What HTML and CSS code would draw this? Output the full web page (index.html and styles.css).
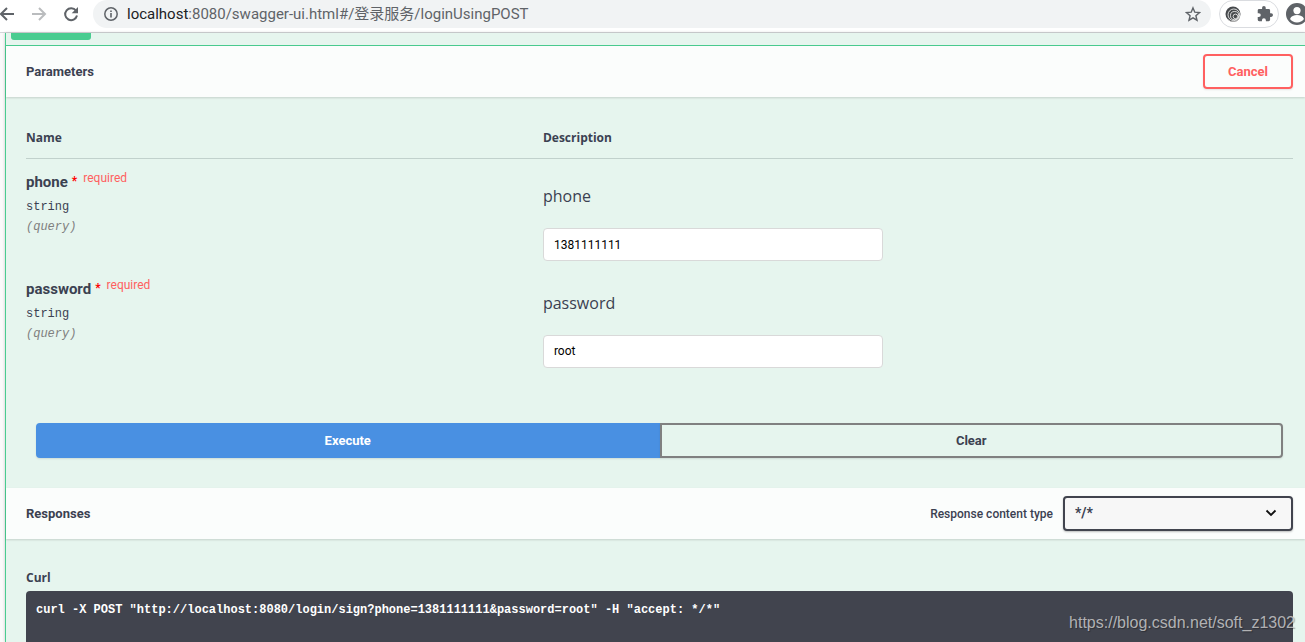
FILE: index.html
```html
<!DOCTYPE html>
<html lang="en">
<head>
<meta charset="utf-8">
<title>Swagger UI</title>
<link rel="stylesheet" href="styles.css">
</head>
<body>
<header class="toolbar">
  <nav class="nav" aria-label="Browser navigation">
    <button class="icon-btn" aria-label="Back"><svg width="16" height="16" viewBox="0 0 16 16"><path d="M15 8H2M8 2L2 8l6 6" fill="none" stroke="#5f6368" stroke-width="2"/></svg></button>
    <button class="icon-btn" aria-label="Forward"><svg width="16" height="16" viewBox="0 0 16 16"><path d="M1 8h13M8 2l6 6-6 6" fill="none" stroke="#babcbe" stroke-width="2"/></svg></button>
    <button class="icon-btn" aria-label="Reload"><svg width="16" height="16" viewBox="0 0 16 16"><path d="M13 4.6A6 6 0 1 0 14 9.600" fill="none" stroke="#5f6368" stroke-width="2"/><path d="M15 1v6.300H8.700z" fill="#5f6368"/></svg></button>
  </nav>
  <div class="omnibox">
    <svg width="14" height="14" viewBox="0 0 14 14"><circle cx="7" cy="7" r="6.200" fill="none" stroke="#5f6368" stroke-width="1.500"/><path d="M6.200 6h1.600v4.500H6.200zM6.200 3.400h1.600V5H6.200z" fill="#5f6368"/></svg>
    <span class="url"><span class="host">localhost</span>:8080/swagger-ui.html#/登录服务/loginUsingPOST</span>
    <button class="icon-btn" aria-label="Bookmark"><svg width="16" height="16" viewBox="0 0 16 16"><path d="M8 1.900l1.800 4.300 4.700.4-3.600 3.100 1.100 4.500L8 11.800l-4 2.400 1.100-4.500-3.600-3.100 4.700-.4z" fill="none" stroke="#5f6368" stroke-width="1.400"/></svg></button>
  </div>
  <div class="extensions">
    <button class="icon-btn" aria-label="Extension"><svg width="16" height="16" viewBox="0 0 16 16"><circle cx="8" cy="8" r="7.500" fill="#46494c"/><g fill="none" stroke="#fff" stroke-width=".8"><circle cx="8.800" cy="8.800" r="5.800"/><circle cx="9.600" cy="9.600" r="4.100"/><circle cx="10.400" cy="10.400" r="2.300"/></g><path d="M3 13.500a7.500 7.500 0 0 0 11.500-1" fill="none" stroke="#aaa"/></svg></button>
    <button class="icon-btn" aria-label="Extensions"><svg width="16" height="16" viewBox="1 1 22 22"><path d="M20.500 11H19V7a2 2 0 0 0-2-2h-4V3.500a2.500 2.500 0 0 0-5 0V5H4a2 2 0 0 0-2 2v3.800h1.500a2.700 2.700 0 0 1 0 5.400H2V20a2 2 0 0 0 2 2h3.800v-1.500a2.700 2.700 0 0 1 5.400 0V22H17a2 2 0 0 0 2-2v-4h1.500a2.500 2.500 0 0 0 0-5z" fill="#5f6368"/></svg></button>
  </div>
  <button class="icon-btn profile" aria-label="Profile"><svg width="22" height="22" viewBox="0 0 22 22"><circle cx="11" cy="11" r="11" fill="#5f6368"/><circle cx="11" cy="7.600" r="3.600" fill="#fff"/><path d="M4 16c1-3 4-4 7-4s6 1 7 4c-1.700 2.200-4 3.500-7 3.500S5.700 18.200 4 16z" fill="#fff"/></svg></button>
</header>
<main class="operation">
  <div class="summary"><span class="method"></span></div>
  <section class="section-head">
    <h4>Parameters</h4>
    <button class="btn cancel">Cancel</button>
  </section>
  <section class="parameters">
    <table>
      <thead><tr><th class="col-name">Name</th><th>Description</th></tr></thead>
      <tbody>
        <tr>
          <td>
            <div class="param-name">phone<span class="star">*</span><span class="required">required</span></div>
            <div class="param-type">string</div>
            <div class="param-in">(query)</div>
          </td>
          <td><label for="phone">phone</label><input id="phone" type="text" value="1381111111"></td>
        </tr>
        <tr>
          <td>
            <div class="param-name">password<span class="star">*</span><span class="required">required</span></div>
            <div class="param-type">string</div>
            <div class="param-in">(query)</div>
          </td>
          <td><label for="password">password</label><input id="password" type="text" value="root"></td>
        </tr>
      </tbody>
    </table>
  </section>
  <div class="actions">
    <button class="btn execute">Execute</button>
    <button class="btn clear">Clear</button>
  </div>
  <section class="section-head">
    <h4>Responses</h4>
    <label class="type-label" for="content-type">Response content type</label>
    <div class="select">
      <select id="content-type"><option>*/*</option></select>
      <svg width="12" height="8" viewBox="0 0 12 8"><path d="M1.500 1.500L6 6l4.500-4.500" fill="none" stroke="#111" stroke-width="1.800"/></svg>
    </div>
  </section>
  <section class="curl">
    <h4>Curl</h4>
    <pre>curl -X POST "http://localhost:8080/login/sign?phone=1381111111&amp;password=root" -H "accept: */*"</pre>
  </section>
</main>
<div class="watermark">https://blog.csdn.net/soft_z1302</div>
</body>
</html>
```
FILE: styles.css
```css
* { box-sizing: border-box; }

body {
  display: flex;
  flex-direction: column;
  height: 100vh;
  margin: 0;
  overflow: hidden;
  background: #fafafa;
  color: #3b4151;
  font-family: "Open Sans", sans-serif;
}

h4 { margin: 0; }
button { font: inherit; cursor: pointer; }
svg { display: block; }

.toolbar {
  display: flex;
  align-items: flex-start;
  flex: none;
  height: 33px;
  background: #fff;
  border-bottom: 1px solid #d5d7da;
}

.icon-btn {
  flex: none;
  padding: 0;
  border: 0;
  background: none;
}

.nav {
  display: flex;
  gap: 16px;
  padding: 6px 14px 0 0;
  margin-left: -1px;
}

.omnibox {
  display: flex;
  align-items: center;
  flex: 1;
  gap: 9px;
  height: 28px;
  padding: 0 10px 0 11px;
  background: #f1f3f4;
  border-radius: 14px;
}

.url {
  flex: 1;
  color: #5f6368;
  font: 15px/20px Roboto, "Noto Sans CJK SC", sans-serif;
}
.host { color: #202124; }

.extensions {
  display: flex;
  align-items: center;
  gap: 16px;
  height: 28px;
  margin: 0 7px 0 8px;
  padding: 0 5px;
  border: 1px solid #dadce0;
  border-radius: 14px;
}

.profile {
  width: 19px;
  margin-top: 3px;
  overflow: hidden;
}

.operation {
  display: flex;
  flex: 1;
  flex-direction: column;
  min-height: 0;
  margin-left: 5px;
  background: #e6f5ee;
  border-left: 1px solid #49cc90;
  box-shadow: 0 0 3px rgba(0, 0, 0, .2);
}

.summary {
  flex: none;
  height: 13px;
  padding-left: 5px;
  border-bottom: 1px solid #49cc90;
}

.method {
  display: block;
  width: 80px;
  height: 7px;
  background: #49cc90;
  border-radius: 0 0 3px 3px;
}

.section-head {
  display: flex;
  align-items: center;
  flex: none;
  min-height: 51px;
  padding: 8px 12px 8px 20px;
  background: #fbfdfc;
  box-shadow: 0 1px 2px rgba(0, 0, 0, .15);
}
.section-head h4 {
  flex: 1;
  padding-top: 1px;
  font: bold 13px/20px Roboto, sans-serif;
}

.btn {
  height: 35px;
  padding: 1px 6px 0;
  border: 2px solid #808080;
  border-radius: 4px;
  background: transparent;
  box-shadow: 0 1px 2px rgba(0, 0, 0, .1);
  color: #3b4151;
  font: bold 13px/20px Roboto, sans-serif;
}

.cancel {
  width: 90px;
  border-color: #ff6060;
  color: #ff6060;
}

.parameters { padding: 20px 12px 0 20px; }

table {
  width: 100%;
  border-collapse: collapse;
  table-layout: fixed;
}
th {
  padding: 12px 0;
  border-bottom: 1px solid #c1d1cc;
  font-size: 12px;
  line-height: 17px;
  text-align: left;
}
.col-name { width: 40.8%; }
td {
  height: 107px;
  padding: 11px 0 0;
  vertical-align: top;
}

.param-name {
  display: flex;
  font: bold 15px/24px Roboto, sans-serif;
}
.star {
  margin: 0 6px 0 4px;
  color: #f00;
  font-size: 12px;
  line-height: 22px;
}
.required {
  color: #ff6060;
  font-size: 12px;
  font-weight: 400;
  line-height: 17px;
}
.param-type, .param-in {
  font: 12px/20px "Liberation Mono", monospace;
}
.param-type { padding-top: 3px; }
.param-in {
  color: #808080;
  font-style: italic;
}

td label {
  display: block;
  padding: 14px 0 20px;
  font-size: 16px;
  line-height: 24px;
}
td input {
  display: block;
  width: 340px;
  max-width: 100%;
  height: 33px;
  padding: 0 10px;
  border: 1px solid #d9d9d9;
  border-radius: 4px;
  background: #fff;
  color: #000;
  font: 12px/20px Roboto, sans-serif;
}

.actions {
  display: flex;
  padding: 50px 22px 30px 30px;
}
.actions .btn { flex: 1; }
.actions .execute {
  border-color: #4990e2;
  border-radius: 4px 0 0 4px;
  background: #4990e2;
  color: #fff;
}
.actions .clear { border-radius: 0 4px 4px 0; }

.type-label {
  margin-right: 10px;
  padding-top: 1px;
  font: 500 12px/20px Roboto, sans-serif;
}
.select {
  display: grid;
  align-items: center;
  width: 230px;
}
.select > * { grid-area: 1 / 1; }
.select svg {
  justify-self: end;
  margin-right: 16px;
  pointer-events: none;
}
select {
  width: 100%;
  height: 35px;
  padding: 0 10px;
  appearance: none;
  border: 2px solid #41444e;
  border-radius: 4px;
  background: #f7f7f7;
  box-shadow: 0 1px 2px rgba(0, 0, 0, .25);
  color: #3b4151;
  font: bold 14px/20px Roboto, sans-serif;
}

.curl {
  display: flex;
  flex: 1;
  flex-direction: column;
  padding: 30px 12px 0 20px;
}
.curl h4 {
  font-size: 12px;
  line-height: 18px;
}
pre {
  flex: 1;
  margin: 4px 0 0;
  padding: 11px 10px;
  border-radius: 4px 4px 0 0;
  background: #41444e;
  color: #fff;
  font: bold 12px/16px "Liberation Mono", monospace;
  white-space: pre-wrap;
}

.watermark {
  position: absolute;
  right: 10px;
  bottom: 9px;
  color: rgba(210, 210, 210, .8);
  font: 16px/20px "Liberation Sans", sans-serif;
  text-shadow: 1px 1px 1px rgba(0, 0, 0, .3);
}
```
